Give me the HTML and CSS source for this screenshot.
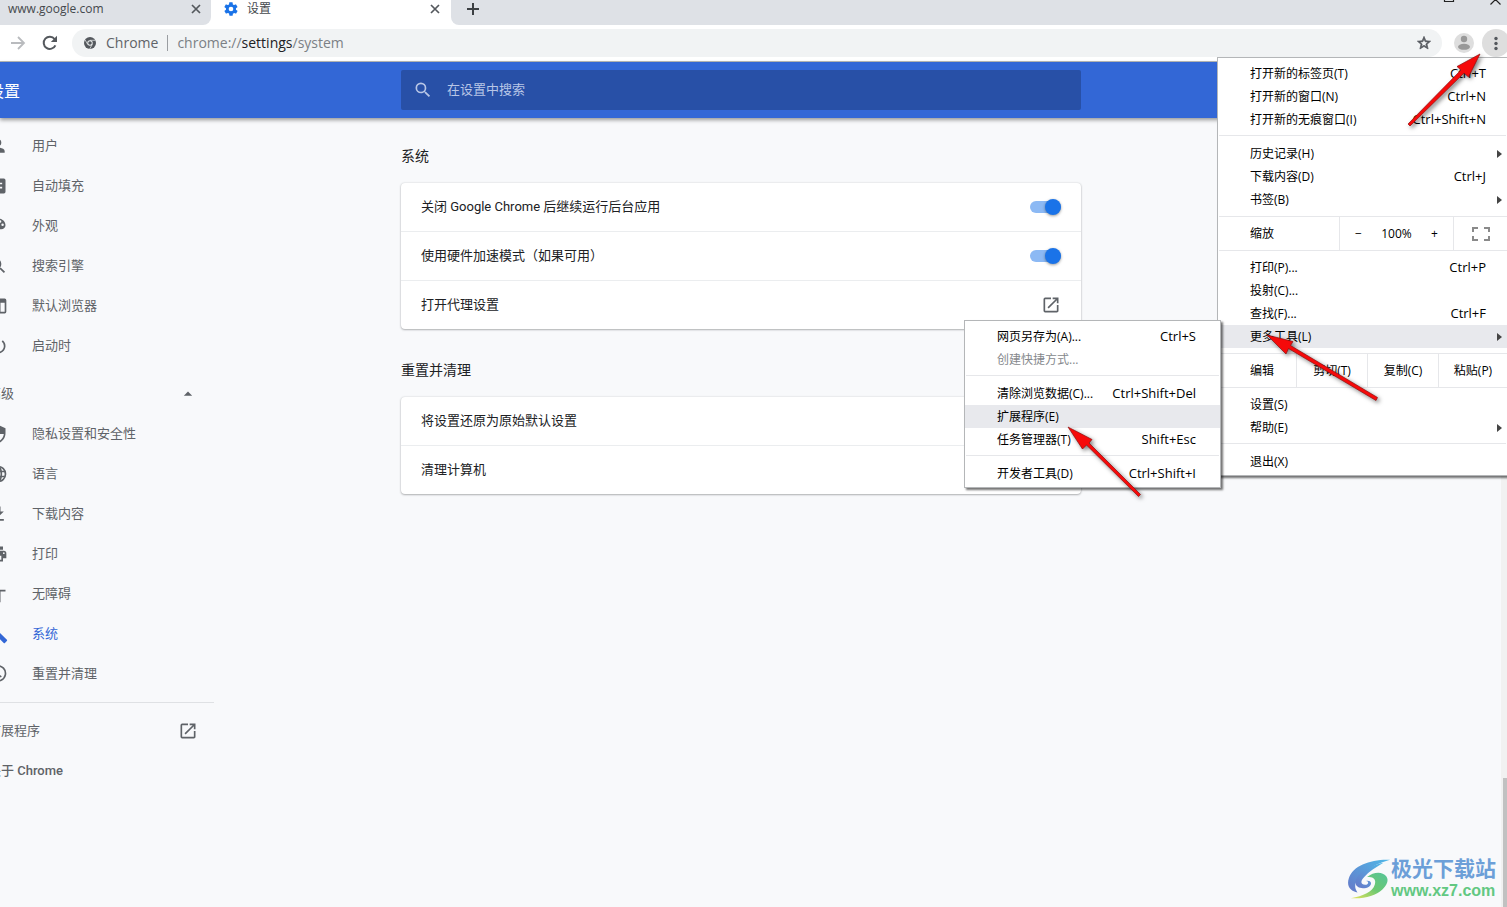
FILE: index.html
```html
<!DOCTYPE html>
<html lang="zh-CN">
<head>
<meta charset="utf-8">
<title>设置</title>
<link rel="stylesheet" href="styles.css">
</head>
<body>
<svg class="defs" aria-hidden="true">
  <symbol id="external" viewBox="0 0 24 24"><path d="M19 19H5V5h7V3H5a2 2 0 0 0-2 2v14a2 2 0 0 0 2 2h14c1.100 0 2-.9 2-2v-7h-2v7zM14 3v2h3.600l-9.800 9.800 1.400 1.400L19 6.400V10h2V3h-7z"/></symbol>
  <symbol id="search" viewBox="0 0 24 24"><path d="M15.500 14h-.79l-.28-.27A6.470 6.470 0 0 0 16 9.500 6.500 6.500 0 1 0 9.500 16c1.610 0 3.090-.59 4.230-1.570l.27.28v.79l5 4.990L20.490 19l-4.990-5zm-6 0a4.500 4.500 0 1 1 0-9 4.500 4.500 0 0 1 0 9z"/></symbol>
  <symbol id="close" viewBox="0 0 10 10"><path d="M1 1l8 8M9 1L1 9" fill="none" stroke="#54585d" stroke-width="1.700"/></symbol>
</svg>

<div class="tabs">
  <div class="tab"><span class="tab-title">www.google.com</span><button class="tab-close" aria-label="关闭"><svg><use href="#close"/></svg></button></div>
  <div class="tab active">
    <svg class="gear" viewBox="0 0 24 24"><path d="M19.400 13c.1-.3.1-.6.1-1s0-.7-.1-1l2.100-1.600c.2-.2.2-.4.1-.6l-2-3.500c-.1-.2-.4-.3-.6-.2l-2.500 1c-.5-.4-1.100-.7-1.700-1l-.4-2.600c0-.3-.2-.5-.5-.5h-4c-.3 0-.5.2-.5.4l-.4 2.700c-.6.2-1.200.6-1.700 1l-2.500-1c-.2-.1-.5 0-.6.2l-2 3.500c-.1.200-.1.500.1.600L4.500 11c0 .3-.1.700-.1 1s0 .7.1 1l-2.100 1.600c-.2.200-.2.400-.1.600l2 3.500c.1.200.4.300.6.200l2.500-1c.5.4 1.100.7 1.700 1l.4 2.600c0 .3.200.5.500.5h4c.3 0 .5-.2.5-.4l.4-2.700c.6-.2 1.200-.6 1.700-1l2.500 1c.2.100.5 0 .6-.2l2-3.500c.1-.2.1-.5-.1-.6zM12 15.500a3.500 3.500 0 1 1 0-7 3.500 3.500 0 0 1 0 7z"/></svg>
    <span class="tab-title">设置</span><button class="tab-close" aria-label="关闭"><svg><use href="#close"/></svg></button></div>
  <button class="new-tab" aria-label="新标签页"><svg viewBox="0 0 12 12"><path d="M6 0v12M0 6h12" stroke="#3c4043" stroke-width="2"/></svg></button>
  <svg class="window-buttons" viewBox="0 0 64 8" aria-hidden="true"><path d="M1.500-6v7.500h9V-6M47.500 4.500L57.500-5.500M57.500 4.500L47.500-5.500" fill="none" stroke="#222" stroke-width="1.200"/></svg>
</div>

<div class="toolbar">
  <button class="nav-btn" aria-label="前进"><svg viewBox="0 0 16 16"><path d="M1 8h13M8 2l6 6-6 6" fill="none" stroke="#b9bbbe" stroke-width="1.800"/></svg></button>
  <button class="nav-btn" aria-label="重新加载"><svg viewBox="0 0 16 16"><path d="M13.400 10.300A6.100 6.100 0 1 1 12.600 4" fill="none" stroke="#54585d" stroke-width="2"/><path d="M15 .8v6.200H8.800z" fill="#54585d"/></svg></button>
  <div class="omnibox">
    <svg class="chrome-icon" viewBox="0 0 12 12"><circle cx="6" cy="6" r="6" fill="#54585d"/><circle cx="6" cy="6" r="2.700" fill="#f1f3f4"/><circle cx="6" cy="6" r="1.800" fill="#54585d"/><path d="M6 3.300h5.300M3.700 7.400L1.100 2.900M8.300 7.400l-2.600 4.500" stroke="#f1f3f4" stroke-width=".7"/></svg>
    <span class="origin">Chrome</span>
    <span class="url">chrome://<b>settings</b>/system</span>
    <button class="star" aria-label="添加书签"><svg viewBox="0 0 24 24"><path d="M22 9.240l-7.190-.62L12 2 9.190 8.630 2 9.240l5.460 4.730L5.820 21 12 17.270 18.180 21l-1.630-7.030L22 9.240zM12 15.400l-3.760 2.270 1-4.280-3.320-2.880 4.380-.38L12 6.100l1.710 4.040 4.380.38-3.320 2.880 1 4.280L12 15.400z"/></svg></button>
  </div>
  <button class="avatar" aria-label="个人资料"><svg viewBox="0 0 20 20"><circle cx="10" cy="10" r="10" fill="#dedede"/><circle cx="10" cy="6" r="3.200" fill="#999"/><ellipse cx="10" cy="13.800" rx="6" ry="3" fill="#999"/></svg></button>
  <button class="more" aria-label="菜单"><svg viewBox="0 0 28 28"><circle cx="14" cy="9.500" r="1.700"/><circle cx="14" cy="14.500" r="1.700"/><circle cx="14" cy="19.500" r="1.700"/></svg></button>
</div>

<header class="header">
  <h1>设置</h1>
  <label class="search"><svg><use href="#search"/></svg><input type="text" placeholder="在设置中搜索" aria-label="在设置中搜索"></label>
</header>

<div class="page">
  <nav class="sidebar">
    <a href="#"><svg viewBox="0 0 24 24"><path d="M12 12a4 4 0 1 0 0-8 4 4 0 0 0 0 8zm0 2c-2.700 0-8 1.300-8 4v2h16v-2c0-2.700-5.300-4-8-4z"/></svg>用户</a>
    <a href="#"><svg viewBox="0 0 24 24"><path d="M19 3H5a2 2 0 0 0-2 2v14c0 1.100.9 2 2 2h14a2 2 0 0 0 2-2V5a2 2 0 0 0-2-2zm-2 12H6v-2h11zm0-5H6V8h11z"/></svg>自动填充</a>
    <a href="#"><svg viewBox="0 0 24 24"><path d="M12 3a9 9 0 0 0 0 18c.8 0 1.500-.7 1.500-1.500 0-.4-.1-.7-.4-1-.2-.3-.4-.6-.4-1 0-.8.7-1.500 1.500-1.500H16a5 5 0 0 0 5-5c0-4.400-4-8-9-8zm-5.500 9a1.500 1.500 0 1 1 0-3 1.500 1.500 0 0 1 0 3zm3-4a1.500 1.500 0 1 1 0-3 1.500 1.500 0 0 1 0 3zm5 0a1.500 1.500 0 1 1 0-3 1.500 1.500 0 0 1 0 3zm3 4a1.500 1.500 0 1 1 0-3 1.500 1.500 0 0 1 0 3z"/></svg>外观</a>
    <a href="#"><svg><use href="#search"/></svg>搜索引擎</a>
    <a href="#"><svg viewBox="0 0 24 24"><path d="M20 3H4a2 2 0 0 0-2 2v14c0 1.100.9 2 2 2h16a2 2 0 0 0 2-2V5a2 2 0 0 0-2-2zm-7 16H4V8h9zm7 0h-5V8h5z"/></svg>默认浏览器</a>
    <a href="#"><svg viewBox="0 0 24 24"><path d="M13 3h-2v10h2V3zm4.830 2.170l-1.420 1.420A6.920 6.920 0 0 1 19 12a7 7 0 1 1-11.420-5.420L6.170 5.170A8.930 8.930 0 0 0 3 12a9 9 0 1 0 14.830-6.830z"/></svg>启动时</a>
    <button class="advanced">高级<svg viewBox="0 0 24 24"><path d="M7 14l5-5 5 5z"/></svg></button>
    <a href="#"><svg viewBox="0 0 24 24"><path d="M12 1L3 5v6c0 5.550 3.840 10.740 9 12 5.160-1.260 9-6.450 9-12V5l-9-4zm0 11h7c-.5 4.100-3.300 7.800-7 8.900V12H5V6.300l7-3.100z"/></svg>隐私设置和安全性</a>
    <a href="#"><svg viewBox="0 0 24 24" class="line"><circle cx="12" cy="12" r="9"/><ellipse cx="12" cy="12" rx="4" ry="9"/><path d="M4 9h16M4 15h16"/></svg>语言</a>
    <a href="#"><svg viewBox="0 0 24 24"><path d="M19 9h-4V3H9v6H5l7 7zM5 18v2h14v-2z"/></svg>下载内容</a>
    <a href="#"><svg viewBox="0 0 24 24"><path d="M19 8H5a3 3 0 0 0-3 3v6h4v4h12v-4h4v-6a3 3 0 0 0-3-3zm-3 11H8v-5h8zm3-7a1 1 0 1 1 0-2 1 1 0 0 1 0 2zM18 3H6v4h12z"/></svg>打印</a>
    <a href="#"><svg viewBox="0 0 24 24"><path d="M12 2a2 2 0 1 1 0 4 2 2 0 0 1 0-4zm9 7h-6v13h-2v-6h-2v6H9V9H3V7h18z"/></svg>无障碍</a>
    <a href="#" class="current"><svg viewBox="0 0 24 24"><path d="M22.700 19l-9.100-9.100c.9-2.300.4-5-1.500-6.900-2-2-5-2.400-7.400-1.300L9 6 6 9 1.600 4.700C.4 7.100.9 10.100 2.900 12.100c1.900 1.900 4.600 2.400 6.900 1.500l9.100 9.100c.4.4 1 .4 1.400 0l2.300-2.300c.5-.4.5-1.100.1-1.400z"/></svg>系统</a>
    <a href="#"><svg viewBox="0 0 24 24" class="line"><path d="M4 7a9 9 0 1 1-1 5M3 3v5h5M12 7v6l4 2.500"/></svg>重置并清理</a>
    <hr>
    <a href="#" class="plain">扩展程序<svg><use href="#external"/></svg></a>
    <a href="#" class="plain about">关于 Chrome</a>
  </nav>

  <main class="content">
    <h2>系统</h2>
    <section class="card">
      <label class="row">关闭 Google Chrome 后继续运行后台应用<input class="toggle" type="checkbox" checked></label>
      <label class="row">使用硬件加速模式（如果可用）<input class="toggle" type="checkbox" checked></label>
      <button class="row">打开代理设置<svg><use href="#external"/></svg></button>
    </section>
    <h2>重置并清理</h2>
    <section class="card">
      <button class="row">将设置还原为原始默认设置</button>
      <button class="row">清理计算机</button>
    </section>
  </main>
  <div class="scrollbar" aria-hidden="true"><div class="thumb"></div></div>
</div>

<div class="menu main-menu">
  <button class="item">打开新的标签页(T)<kbd>Ctrl+T</kbd></button>
  <button class="item">打开新的窗口(N)<kbd>Ctrl+N</kbd></button>
  <button class="item">打开新的无痕窗口(I)<kbd>Ctrl+Shift+N</kbd></button>
  <hr>
  <button class="item sub">历史记录(H)</button>
  <button class="item">下载内容(D)<kbd>Ctrl+J</kbd></button>
  <button class="item sub">书签(B)</button>
  <div class="strip">
    <span class="strip-label">缩放</span>
    <div class="zoom"><button aria-label="缩小">−</button><span>100%</span><button aria-label="放大">+</button></div>
    <button class="full" aria-label="全屏"><svg viewBox="0 0 18 14"><path d="M1 5V1h5M12 1h5v4M17 9v4h-5M6 13H1V9" fill="none" stroke="#8a8a8a" stroke-width="2"/></svg></button>
  </div>
  <button class="item">打印(P)...<kbd>Ctrl+P</kbd></button>
  <button class="item">投射(C)...</button>
  <button class="item">查找(F)...<kbd>Ctrl+F</kbd></button>
  <div class="parent">
    <button class="item sub hover">更多工具(L)</button>
    <div class="menu submenu">
      <button class="item">网页另存为(A)...<kbd>Ctrl+S</kbd></button>
      <button class="item" disabled>创建快捷方式...</button>
      <hr>
      <button class="item">清除浏览数据(C)...<kbd>Ctrl+Shift+Del</kbd></button>
      <button class="item hover">扩展程序(E)</button>
      <button class="item">任务管理器(T)<kbd>Shift+Esc</kbd></button>
      <hr>
      <button class="item">开发者工具(D)<kbd>Ctrl+Shift+I</kbd></button>
    </div>
  </div>
  <div class="strip edit">
    <span class="strip-label">编辑</span>
    <button>剪切(T)</button><button>复制(C)</button><button>粘贴(P)</button>
  </div>
  <button class="item">设置(S)</button>
  <button class="item sub">帮助(E)</button>
  <hr>
  <button class="item">退出(X)</button>
</div>

<svg class="arrows" viewBox="1057 50 450 450" aria-hidden="true">
  <g fill="#f60a0a" stroke="#8e0f0f" stroke-width=".7">
    <path d="M1480 54l-23 12.500 4 3.500-53 54 2 2 54-53 4.500 4z"/>
    <path d="M1267 335l19 19 2.500-5.500 87.500 52 1.500-3-87-52 2.500-4z"/>
    <path d="M1068 427l14.500 22 4-4 52 51.500 2-2-51.500-51.500 3-3.500z"/>
  </g>
</svg>

<div class="watermark">
  <svg viewBox="0 0 46 42" aria-hidden="true">
    <defs>
      <linearGradient id="blue" x1="1" y1="0" x2="0" y2="1"><stop offset="0" stop-color="#4fb8e8"/><stop offset="1" stop-color="#6678c8"/></linearGradient>
      <linearGradient id="green" x1="1" y1="0" x2="0" y2="1"><stop offset="0" stop-color="#55c49a"/><stop offset=".5" stop-color="#6cc872"/><stop offset="1" stop-color="#e8e45a"/></linearGradient>
    </defs>
    <path d="M45 1C26 0 6 7 2 20c-3 9 2 14 9 15-5-6-2-13 6-20C24 9 34 4 45 1z" fill="url(#blue)"/>
    <path d="M38 4C24 7 9 15 9 25c0 6 9 7 14 4 4-3 2-7-3-6 3 0 3 4-1 4-5 0-5-4-1-8 5-6 12-10 20-15z" fill="url(#blue)"/>
    <path d="M21 19c7-6 16-6 20-1 3 4 1 9-4 14-7 7-20 10-33 9 13-2 23-7 25-14 2-6-2-9-8-8z" fill="url(#green)"/>
  </svg>
  <div class="brand"><strong>极光下载站</strong><span>www.xz7.com</span></div>
</div>
</body>
</html>
```

FILE: styles.css
```css
* { box-sizing: border-box; }

body {
  margin: 0;
  height: 100vh;
  display: flex;
  flex-direction: column;
  position: relative;
  overflow: hidden;
  background: #f8f9fb;
  color: #202124;
  font: 13px/20px Roboto, "Noto Sans CJK SC", sans-serif;
}

button {
  border: 0;
  padding: 0;
  background: none;
  color: inherit;
  font: inherit;
  text-align: left;
}

svg { display: block; flex: none; }
.defs { position: absolute; width: 0; height: 0; }

/* Tab strip: white shows through the rounded corners beside the active tab */
.tabs {
  display: flex;
  height: 25px;
  flex: none;
  background: linear-gradient(to right, #fff 50%, #dee1e6 50%);
}
.tab {
  display: flex;
  align-items: center;
  width: 211px;
  padding: 0 10px 8px 8px;
  color: #45494d;
  font: 12px/16px "Open Sans", "Noto Sans CJK SC", sans-serif;
  background: #dee1e6;
  border-radius: 0 0 8px 0;
}
.tab.active {
  width: 240px;
  padding: 0 11px 8px 12px;
  background: #fff;
  border-radius: 0;
}
.gear { width: 16px; height: 16px; margin-right: 8px; fill: #1a73e8; }
.tab-title { flex: 1; }
.tab-close svg { width: 10px; height: 10px; }
.new-tab {
  flex: 1;
  padding: 0 0 8px 16px;
  background: #dee1e6;
  border-radius: 0 0 0 8px;
}
.new-tab svg { width: 12px; height: 12px; }
.window-buttons { width: 64px; height: 8px; }

/* Toolbar */
.toolbar {
  display: flex;
  align-items: center;
  height: 37px;
  flex: none;
  padding-left: 10px;
  background: #fff;
  border-bottom: 1px solid #b9bbb8;
  overflow: hidden;
}
.nav-btn { margin-right: 16px; }
.nav-btn svg { width: 16px; height: 16px; }
.nav-btn + .nav-btn { margin-right: 14px; }
.omnibox {
  flex: 1;
  display: flex;
  align-items: center;
  height: 28px;
  padding: 0 10px 0 12px;
  border-radius: 14px;
  background: #f1f3f4;
  color: #7b8085;
  font: 14px/20px "Open Sans", "Noto Sans CJK SC", sans-serif;
}
.chrome-icon { width: 12px; height: 12px; }
.origin {
  margin-left: 10px;
  padding-right: 9px;
  border-right: 1px solid #9a9da1;
  line-height: 16px;
  color: #5f6368;
}
.url { flex: 1; margin-left: 9px; }
.url b { font-weight: 400; color: #202124; }
.star svg { width: 16px; height: 16px; fill: #54585d; stroke: #54585d; }
.avatar { margin: 0 8px 0 12px; }
.avatar svg { width: 20px; height: 20px; }
.more { margin-right: -3px; border-radius: 14px; background: #dedede; }
.more svg { width: 28px; height: 28px; fill: #54585d; }

/* Settings header and page share the centred column */
.header, .page {
  display: grid;
  grid-template-columns: 1fr minmax(0, 680px) 1fr;
  padding-right: 25px;
}
.header {
  flex: none;
  align-items: center;
  height: 56px;
  position: relative;
  background: #3367d6;
  box-shadow: 0 2px 4px rgba(0, 0, 0, .4);
}
.header h1 {
  margin: 0 0 0 -12px;
  padding-top: 3px;
  color: #fff;
  font-size: 16px;
  font-weight: 400;
}
.search {
  display: flex;
  align-items: center;
  height: 40px;
  padding-left: 12px;
  border-radius: 2px;
  background: #2850a7;
}
.search svg { width: 20px; height: 20px; fill: #b8c6e6; }
.search input {
  flex: 1;
  margin-left: 14px;
  padding: 0;
  border: 0;
  outline: 0;
  background: none;
  color: #fff;
  font: inherit;
}
.search input::placeholder { color: #b8c6e6; opacity: 1; }

.page { flex: 1; position: relative; min-height: 0; }

/* Sidebar */
.sidebar {
  width: 226px;
  margin-left: -12px;
  padding-top: 8px;
}
.sidebar a, .advanced {
  display: flex;
  align-items: center;
  width: 100%;
  height: 40px;
  color: #5f6368;
  text-decoration: none;
}
.sidebar svg { width: 20px; height: 20px; margin-right: 24px; fill: #5f6368; }
.sidebar svg.line { fill: none; stroke: #5f6368; stroke-width: 2; }
.sidebar .current { color: #3367d6; }
.sidebar .current svg { fill: #3367d6; }
.advanced { justify-content: space-between; margin-top: 8px; }
.sidebar .plain { justify-content: space-between; }
.sidebar .advanced svg, .sidebar .plain svg { margin-right: 16px; }
.sidebar .about { font-weight: 500; }
.sidebar hr { margin: 8px 0; border: 0; border-top: 1px solid #dfe1e4; }

/* Content cards */
.content { padding-top: 28px; }
.content h2 { margin: 0 0 17px; font-size: 14px; font-weight: 400; line-height: 20px; }
.card {
  margin-bottom: 31px;
  border-radius: 4px;
  background: #fff;
  box-shadow: 0 1px 2px rgba(60, 64, 67, .35), 0 0 2px rgba(60, 64, 67, .2);
}
.row {
  display: flex;
  align-items: center;
  justify-content: space-between;
  width: 100%;
  height: 48px;
  padding: 0 20px;
}
.row + .row { height: 49px; border-top: 1px solid #ebedef; }
.row svg { width: 20px; height: 20px; fill: #5f6368; }
.toggle {
  appearance: none;
  display: flex;
  justify-content: flex-end;
  align-items: center;
  width: 31px;
  height: 12px;
  margin: 0;
  border-radius: 6px;
  background: #8cb9f4;
}
.toggle::before {
  content: "";
  width: 16px;
  height: 16px;
  flex: none;
  border-radius: 50%;
  background: #1a73e8;
  box-shadow: 0 1px 3px rgba(0, 0, 0, .4);
}

.scrollbar {
  position: absolute;
  inset: 0 0 0 auto;
  width: 6px;
  padding-left: 2px;
  display: flex;
  align-items: flex-end;
  background: #f1f1f1;
}
.thumb { width: 100%; height: 129px; background: #c1c1c1; }

/* Menus */
.menu {
  position: absolute;
  border: 1px solid #b4b6b8;
  padding: 4px 0 2px;
  background: #fff;
  color: #000;
  font: 12px/23px "Open Sans", "Noto Sans CJK SC", sans-serif;
  box-shadow: 2px 2px 2px rgba(0, 0, 0, .55);
}
.main-menu { top: 57px; right: 0; width: 290px; border-right: 0; }
.item {
  display: flex;
  justify-content: space-between;
  width: 100%;
  height: 23px;
  padding: 0 21px 0 32px;
  white-space: nowrap;
}
.item kbd { font: inherit; font-size: 13px; }
.item:disabled { color: #85888c; }
.item.hover { background: #e8e9ed; }
.item.sub { align-items: center; padding-right: 5px; }
.item.sub::after {
  content: "";
  border: 4px solid transparent;
  border-left: 5px solid #444;
  border-right: 0;
}
.menu hr { margin: 4px 1px 6px; border: 0; border-top: 1px solid #e6e7ea; }
.parent { position: relative; }
.submenu { top: -5px; right: 286px; width: 257px; }
.submenu .item { padding-right: 24px; }
.strip {
  display: grid;
  grid-template-columns: 120px 1fr 54px;
  height: 35px;
  margin: 5px 0 5px 1px;
  border: solid #e6e7ea;
  border-width: 1px 0;
  line-height: 33px;
}
.strip > * + * { border-left: 1px solid #e6e7ea; }
.strip-label { padding-left: 31px; }
.zoom { display: flex; justify-content: space-between; padding: 0 15px; }
.full { display: grid; place-items: center; }
.full svg { width: 18px; height: 14px; }
.edit { grid-template-columns: 77px 71px 71px 1fr; }
.edit button { text-align: center; }

.arrows {
  position: absolute;
  top: 50px;
  right: 0;
  width: 450px;
  height: 450px;
  pointer-events: none;
  filter: drop-shadow(2px 2px 2px rgba(0, 0, 0, .5));
}

/* Site mark */
.watermark {
  position: absolute;
  right: 11px;
  bottom: 6px;
  display: flex;
  align-items: center;
}
.watermark svg { width: 44px; height: 42px; }
.brand { display: flex; flex-direction: column; white-space: nowrap; }
.brand strong { color: #6c9fd8; font-size: 21px; line-height: 24px; }
.brand span { color: #62c882; font: 700 16px/20px "Liberation Sans", sans-serif; }
```
